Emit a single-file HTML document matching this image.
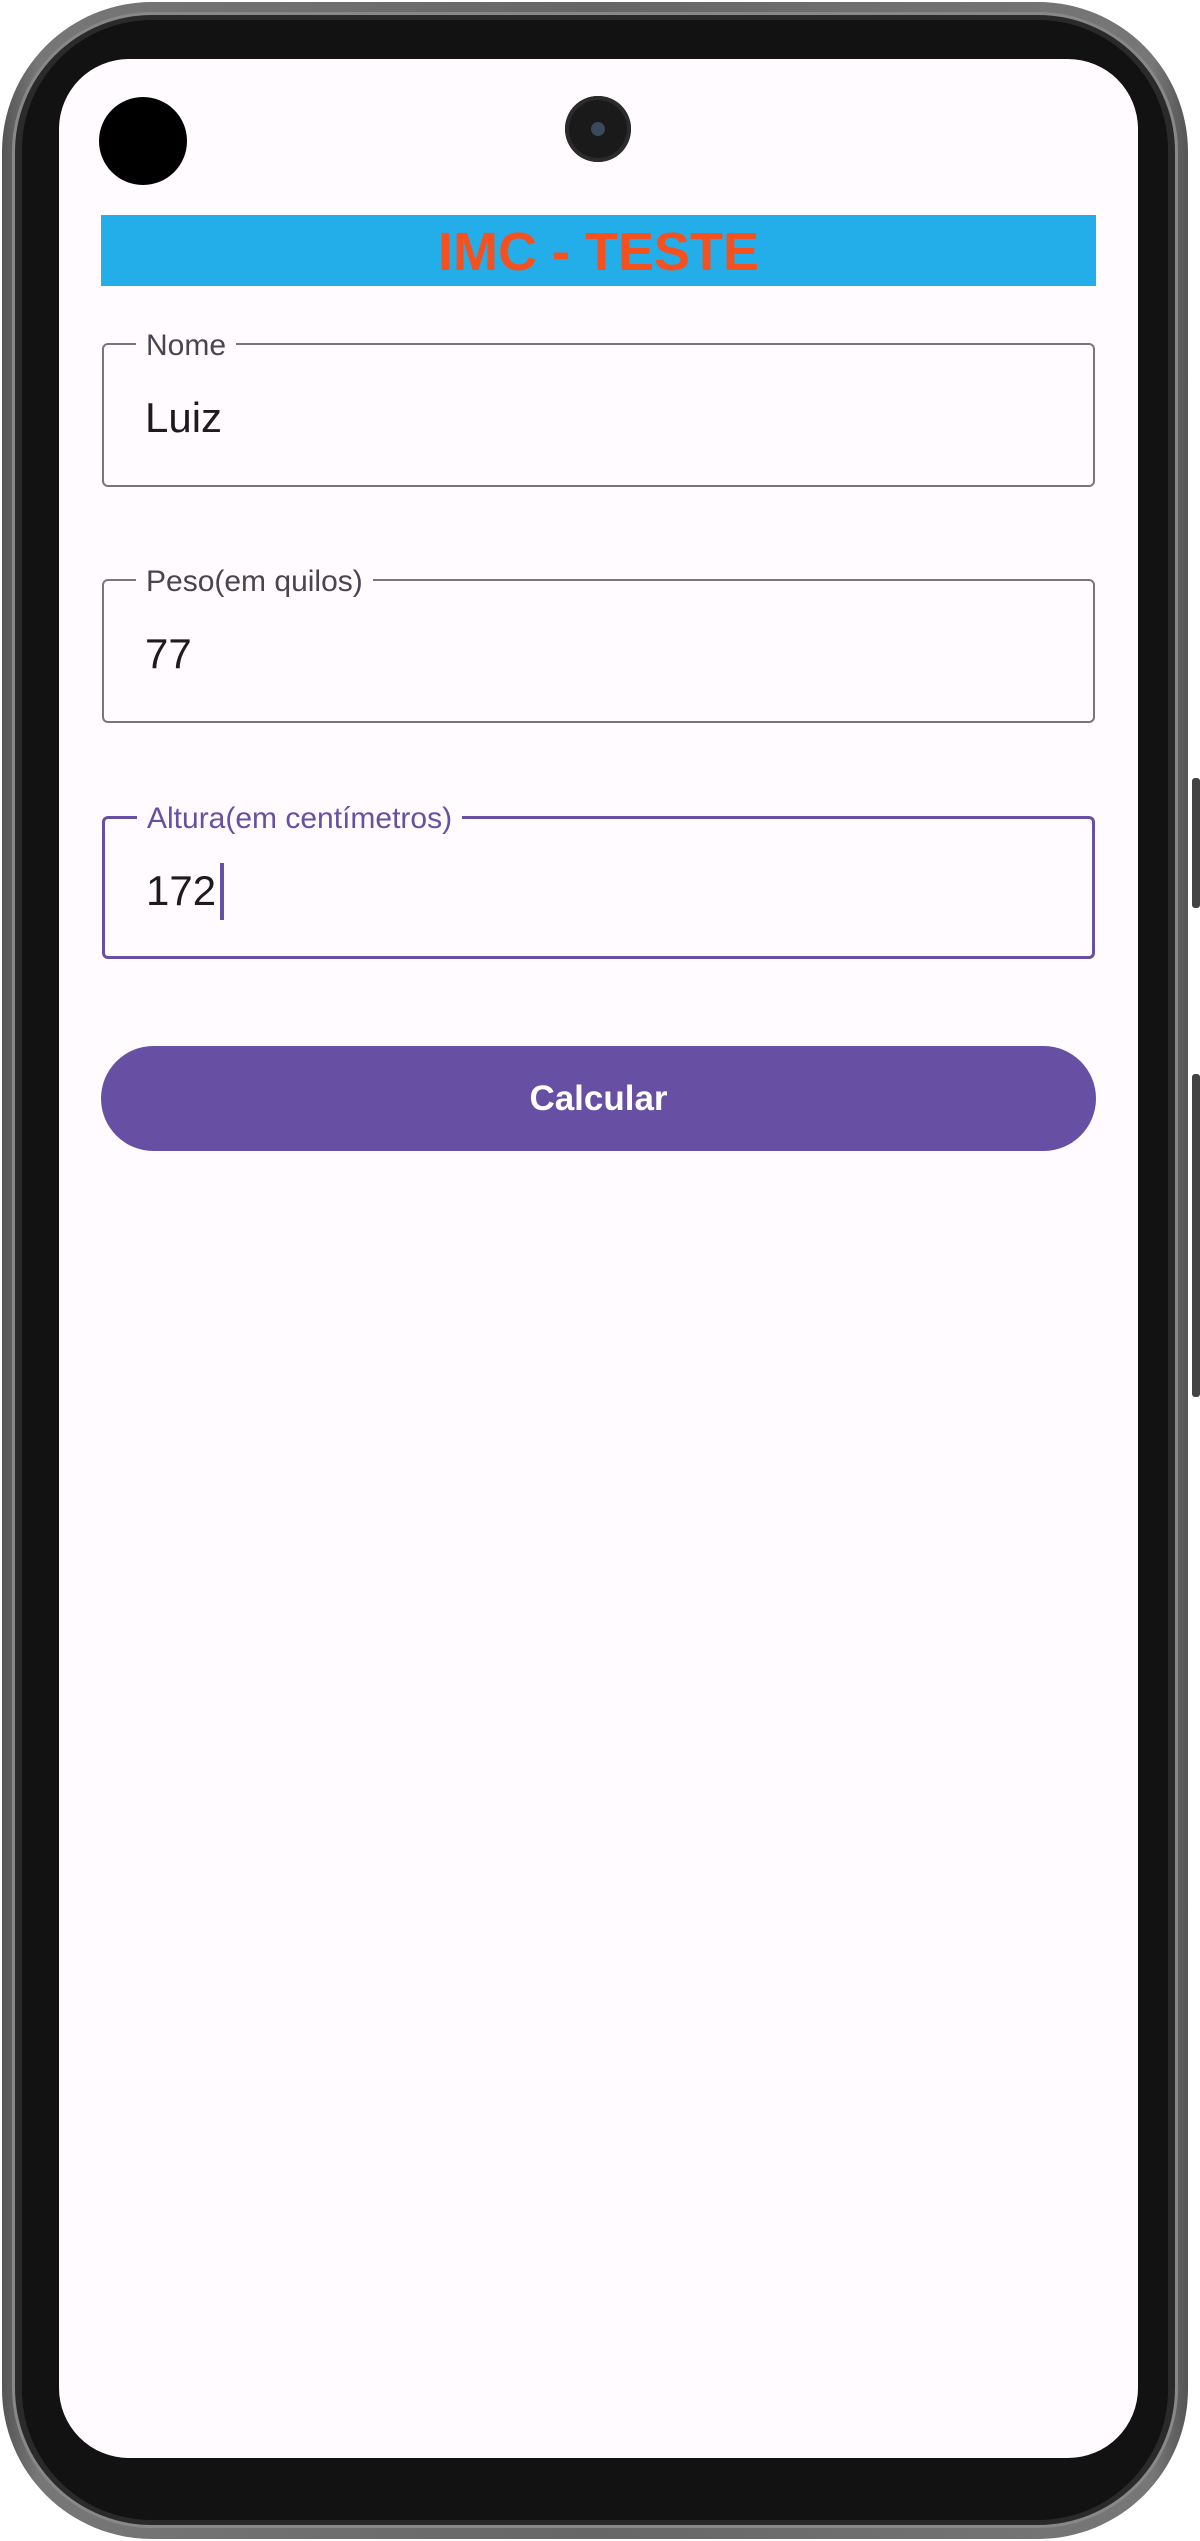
<!DOCTYPE html>
<html><head><meta charset="utf-8"><style>
html,body{margin:0;padding:0;width:1200px;height:2541px;background:#fff;overflow:hidden;font-family:"Liberation Sans",Roboto,sans-serif}
.rim{position:absolute;left:2px;top:2px;width:1186px;height:2537px;border-radius:150px;background:linear-gradient(90deg,#555,#777 3%,#666 50%,#777 97%,#555);}
.rim2{position:absolute;left:12px;top:12px;width:1166px;height:2516px;border-radius:140px;background:#2a2a2a;border:3px solid #888;box-sizing:border-box}
.bezel{position:absolute;left:22px;top:20px;width:1146px;height:2500px;border-radius:130px;background:#121212;}
.screen{position:absolute;left:59px;top:59px;width:1079px;height:2399px;border-radius:70px;background:#fffbfe;overflow:hidden}
.btn-side{position:absolute;right:0;width:8px;background:#444;border-radius:3px}
.dot{position:absolute;border-radius:50%}
.field{position:absolute;left:43px;width:993px;box-sizing:border-box;border:2px solid #79747e;border-radius:6px}
.label{position:absolute;top:-17px;left:32px;background:#fffbfe;padding:0 10px;font-size:30px;color:#49454f;line-height:36px}
.val{position:absolute;left:41px;font-size:42px;color:#1c1b1f}
</style></head><body>
<div class="rim"></div>
<div class="rim2"></div>
<div class="bezel"></div>
<div class="btn-side" style="top:778px;height:130px"></div>
<div class="btn-side" style="top:1074px;height:323px"></div>
<div class="screen">
  <div class="dot" style="left:40px;top:38px;width:88px;height:88px;background:#000"></div>
  <div class="dot" style="left:506px;top:37px;width:66px;height:66px;background:#1a1a1a;box-shadow:inset 0 0 0 4px #2b2b2b"></div>
  <div class="dot" style="left:532px;top:63px;width:14px;height:14px;background:#3a4a5a"></div>
  <div style="position:absolute;left:42px;top:156px;width:995px;height:71px;background:#23aeea;text-align:center;font-weight:bold;font-size:54px;line-height:74px;color:#f4511e">IMC - TESTE</div>
  <div class="field" style="top:284px;height:144px"><div class="label">Nome</div><div class="val" style="top:49px">Luiz</div></div>
  <div class="field" style="top:520px;height:144px"><div class="label">Peso(em quilos)</div><div class="val" style="top:49px">77</div></div>
  <div class="field" style="top:757px;height:143px;border:3px solid #6750a4"><div class="label" style="color:#6750a4;top:-18px">Altura(em centímetros)</div><div class="val" style="top:48px">172</div><div style="position:absolute;left:115px;top:44px;width:4px;height:57px;background:#6750a4"></div></div>
  <div style="position:absolute;left:42px;top:987px;width:995px;height:105px;border-radius:53px;background:#6750a4;color:#fff;text-align:center;line-height:105px;font-size:35px;font-weight:bold">Calcular</div>
</div>
</body></html>
